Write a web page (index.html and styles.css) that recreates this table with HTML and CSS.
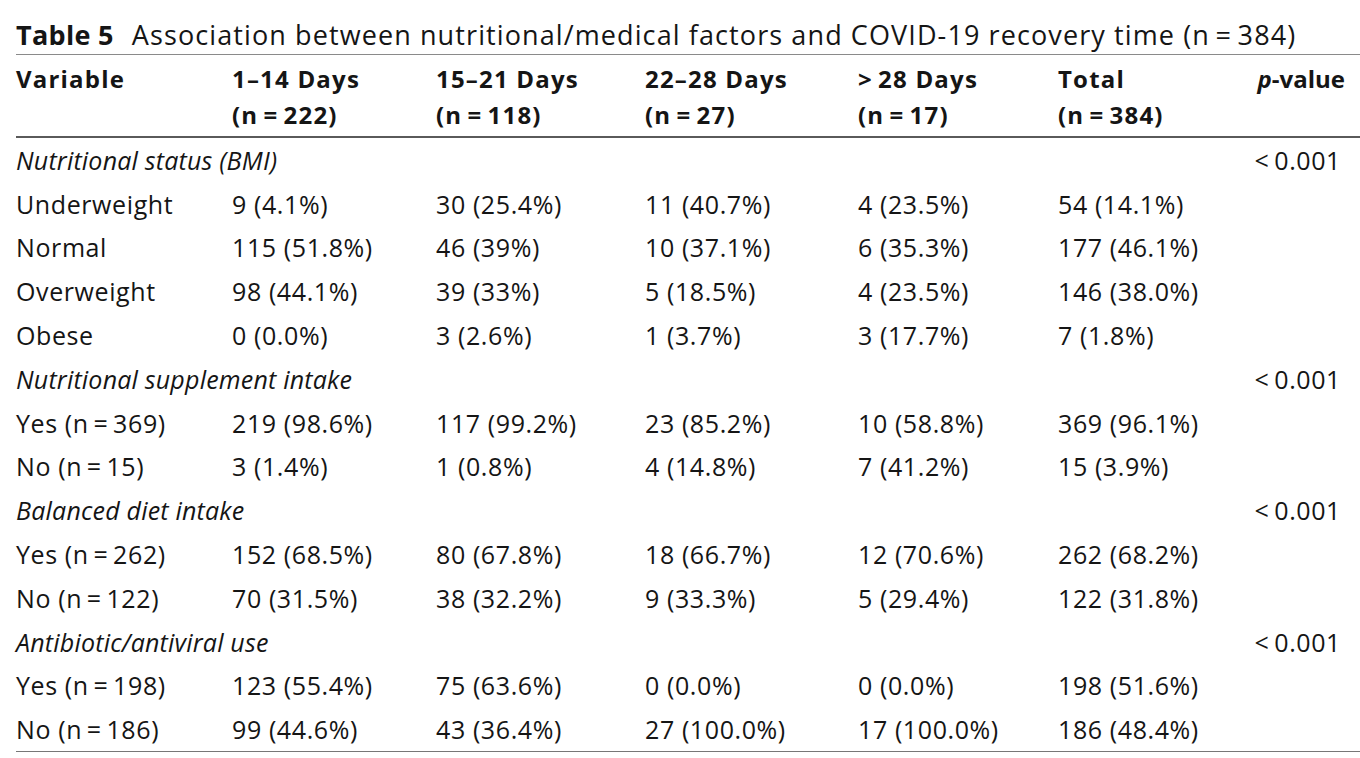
FILE: index.html
```html
<!DOCTYPE html>
<html lang="en">
<head>
<meta charset="utf-8">
<title>Table 5</title>
<link rel="stylesheet" href="styles.css">
</head>
<body>
<div class="page">
  <div class="caption"><span class="label">Table 5</span><span class="caption-text">Association between nutritional/medical factors and COVID-19 recovery time (n&#8201;=&#8201;384)</span></div>
  <table class="data">
    <colgroup>
      <col class="c1"><col class="c2"><col class="c3"><col class="c4"><col class="c5"><col class="c6"><col class="c7">
    </colgroup>
    <thead>
      <tr>
        <th>Variable</th>
        <th>1–14 Days<br>(n&#8201;=&#8201;222)</th>
        <th>15–21 Days<br>(n&#8201;=&#8201;118)</th>
        <th>22–28 Days<br>(n&#8201;=&#8201;27)</th>
        <th>&gt;&#8201;28 Days<br>(n&#8201;=&#8201;17)</th>
        <th>Total<br>(n&#8201;=&#8201;384)</th>
        <th class="pv"><em>p</em>-value</th>
      </tr>
    </thead>
    <tbody>
      <tr class="group"><td colspan="6">Nutritional status (BMI)</td><td class="pv">&lt;&#8201;0.001</td></tr>
      <tr><td>Underweight</td><td>9 (4.1%)</td><td>30 (25.4%)</td><td>11 (40.7%)</td><td>4 (23.5%)</td><td>54 (14.1%)</td><td></td></tr>
      <tr><td>Normal</td><td>115 (51.8%)</td><td>46 (39%)</td><td>10 (37.1%)</td><td>6 (35.3%)</td><td>177 (46.1%)</td><td></td></tr>
      <tr><td>Overweight</td><td>98 (44.1%)</td><td>39 (33%)</td><td>5 (18.5%)</td><td>4 (23.5%)</td><td>146 (38.0%)</td><td></td></tr>
      <tr><td>Obese</td><td>0 (0.0%)</td><td>3 (2.6%)</td><td>1 (3.7%)</td><td>3 (17.7%)</td><td>7 (1.8%)</td><td></td></tr>
      <tr class="group"><td colspan="6">Nutritional supplement intake</td><td class="pv">&lt;&#8201;0.001</td></tr>
      <tr><td>Yes (n&#8201;=&#8201;369)</td><td>219 (98.6%)</td><td>117 (99.2%)</td><td>23 (85.2%)</td><td>10 (58.8%)</td><td>369 (96.1%)</td><td></td></tr>
      <tr><td>No (n&#8201;=&#8201;15)</td><td>3 (1.4%)</td><td>1 (0.8%)</td><td>4 (14.8%)</td><td>7 (41.2%)</td><td>15 (3.9%)</td><td></td></tr>
      <tr class="group"><td colspan="6">Balanced diet intake</td><td class="pv">&lt;&#8201;0.001</td></tr>
      <tr><td>Yes (n&#8201;=&#8201;262)</td><td>152 (68.5%)</td><td>80 (67.8%)</td><td>18 (66.7%)</td><td>12 (70.6%)</td><td>262 (68.2%)</td><td></td></tr>
      <tr><td>No (n&#8201;=&#8201;122)</td><td>70 (31.5%)</td><td>38 (32.2%)</td><td>9 (33.3%)</td><td>5 (29.4%)</td><td>122 (31.8%)</td><td></td></tr>
      <tr class="group"><td colspan="6">Antibiotic/antiviral use</td><td class="pv">&lt;&#8201;0.001</td></tr>
      <tr><td>Yes (n&#8201;=&#8201;198)</td><td>123 (55.4%)</td><td>75 (63.6%)</td><td>0 (0.0%)</td><td>0 (0.0%)</td><td>198 (51.6%)</td><td></td></tr>
      <tr><td>No (n&#8201;=&#8201;186)</td><td>99 (44.6%)</td><td>43 (36.4%)</td><td>27 (100.0%)</td><td>17 (100.0%)</td><td>186 (48.4%)</td><td></td></tr>
    </tbody>
  </table>
</div>
</body>
</html>
```
FILE: styles.css
```css
html, body {
  margin: 0;
  padding: 0;
  background: #ffffff;
}
body {
  font-family: "Open Sans", "Noto Sans", sans-serif;
  color: #151515;
  width: 1360px;
  height: 758px;
  overflow: hidden;
}
.page {
  padding-left: 16px;
}
.caption {
  font-size: 27px;
  height: 55px;
  white-space: nowrap;
  letter-spacing: 1.1px;
  box-sizing: border-box;
  border-bottom: 1px solid #8a8a8a;
  display: flex;
  align-items: flex-end;
  padding-bottom: 6px;
  line-height: 1;
}
.caption .label {
  font-weight: 700;
  letter-spacing: 0.3px;
  margin-right: 18px;
}
.data {
  border-collapse: collapse;
  width: 1344px;
  font-size: 25px;
  letter-spacing: 0.6px;
  table-layout: fixed;
}
.c1 { width: 216px; }
.c2 { width: 204px; }
.c3 { width: 209px; }
.c4 { width: 213px; }
.c5 { width: 200px; }
.c6 { width: 180px; }
.c7 { width: 122px; }
.data th {
  font-size: 24px;
  font-weight: 700;
  letter-spacing: 1.2px;
  text-align: left;
  vertical-align: top;
  line-height: 36px;
  padding: 6px 0 3px;
  white-space: nowrap;
  border-bottom: 2px solid #5a5a5a;
}
.data th em {
  font-style: italic;
}
.data th.pv {
  text-align: right;
  padding-right: 15px;
  letter-spacing: 0;
}
.data td {
  height: 43.8px;
  line-height: 30px;
  padding: 0;
  white-space: nowrap;
  vertical-align: middle;
}
.data td.pv {
  text-align: right;
  padding-right: 19px;
}
.data tr.group td:first-child {
  font-style: italic;
  letter-spacing: 0.2px;
}
.data tbody tr:last-child td {
  border-bottom: 1px solid #777777;
}
```
